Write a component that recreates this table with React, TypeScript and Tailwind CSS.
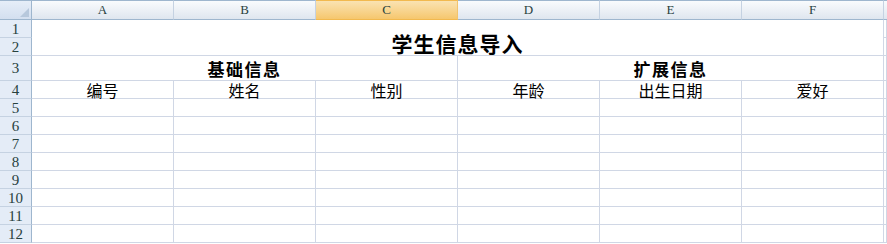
/**
 * Spreadsheet view of the student import template: column headers, row
 * numbers, a merged title cell and two merged section headings.
 */

const COLUMNS = ["A", "B", "C", "D", "E", "F"];
const SELECTED_COLUMN = "C";
const FIELDS = ["编号", "姓名", "性别", "年龄", "出生日期", "爱好"];
const EMPTY_ROWS = [5, 6, 7, 8, 9, 10, 11, 12];

const cjk = "font-['Noto_Sans_CJK_SC',sans-serif]";
const latin = "font-['Liberation_Serif','DejaVu_Serif',serif]";

/** Gray row number on the left edge */
function RowHeader({ n }: { n: number }) {
  return (
    <div
      className={`flex items-center justify-center border-r border-b border-r-[#9eb6ce] border-b-[#c5d2e2] bg-[#e4ecf7] pt-px text-[15px] leading-none text-[#27413e] ${latin}`}
    >
      {n}
    </div>
  );
}

/** Plain white grid cell */
function Cell({ className = "", children }: { className?: string; children?: React.ReactNode }) {
  return (
    <div className={`border-r border-b border-[#d0d7e5] bg-white text-black ${cjk} ${className}`}>
      {children}
    </div>
  );
}

export default function App() {
  return (
    <div className="h-[244px] w-[887px] overflow-hidden bg-white">
      <div className="grid grid-cols-[32px_repeat(6,142px)_1fr] grid-rows-[20px_18px_18px_25px_repeat(9,18px)]">
        {/* Corner select-all box */}
        <div className="relative border-t border-r border-b border-[#9eb6ce] bg-gradient-to-b from-[#e6eef8] to-[#d3dfef]">
          <div className="absolute right-[2px] bottom-[2px] h-0 w-0 border-b-[9px] border-l-[9px] border-b-[#b7c8dc] border-l-transparent" />
        </div>

        {/* Column letters */}
        {COLUMNS.map((c) =>
          c === SELECTED_COLUMN ? (
            <div
              key={c}
              className={`flex items-center justify-center border-t border-r border-b border-t-[#f2b94f] border-r-[#f2c46e] border-b-[#f2b94f] bg-gradient-to-b from-[#fae3b2] to-[#f6c76d] text-[13px] text-[#27413e] ${latin}`}
            >
              {c}
            </div>
          ) : (
            <div
              key={c}
              className={`flex items-center justify-center border-t border-r border-b border-t-[#9eb6ce] border-r-[#c5d2e2] border-b-[#9eb6ce] bg-gradient-to-b from-[#f9fbfd] to-[#dfe6ef] text-[13px] text-[#27413e] ${latin}`}
            >
              {c}
            </div>
          )
        )}
        <div className="border-t border-b border-[#9eb6ce] bg-gradient-to-b from-[#f9fbfd] to-[#dfe6ef]" />

        {/* Rows 1-2: merged title */}
        <RowHeader n={1} />
        <Cell className="col-span-6 row-span-2 flex items-end justify-center pb-[1px]">
          <span className="block h-[21px] text-[21px] leading-none font-bold tracking-[1px]">学生信息导入</span>
        </Cell>
        <Cell />
        <RowHeader n={2} />
        <Cell />

        {/* Row 3: section headings */}
        <RowHeader n={3} />
        <Cell className="col-span-3 flex items-end justify-center pb-[3px]">
          <span className="block h-[17px] text-[17px] leading-none font-bold tracking-[1.5px]">基础信息</span>
        </Cell>
        <Cell className="col-span-3 flex items-end justify-center pb-[3px]">
          <span className="block h-[17px] text-[17px] leading-none font-bold tracking-[1.5px]">扩展信息</span>
        </Cell>
        <Cell />

        {/* Row 4: field names */}
        <RowHeader n={4} />
        {FIELDS.map((f) => (
          <Cell key={f} className="flex items-center justify-center">
            <span className="block h-[16px] text-[16px] leading-none">{f}</span>
          </Cell>
        ))}
        <Cell />

        {/* Empty data rows */}
        {EMPTY_ROWS.map((n) => (
          <div key={n} className="contents">
            <RowHeader n={n} />
            {COLUMNS.map((c) => (
              <Cell key={c} />
            ))}
            <Cell />
          </div>
        ))}
      </div>
    </div>
  );
}
